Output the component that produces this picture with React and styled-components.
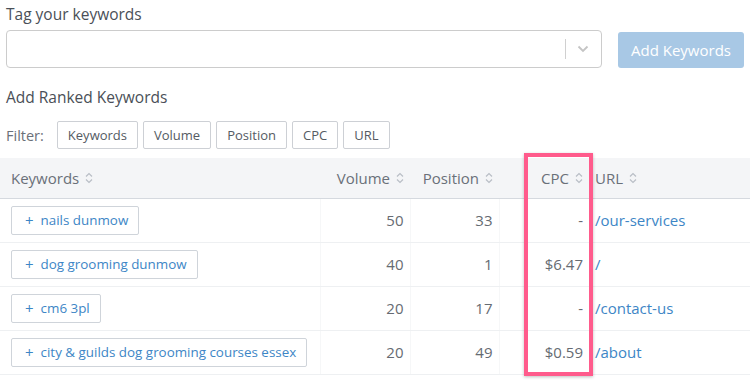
import React from 'react';
import styled, { createGlobalStyle } from 'styled-components';

const GlobalStyle = createGlobalStyle`
  body {
    margin: 0;
    background: #fff;
    font-family: 'Open Sans', 'Liberation Sans', sans-serif;
    color: #555;
  }
`;

const rows = [
  { keyword: 'nails dunmow', volume: 50, position: 33, cpc: '-', url: '/our-services' },
  { keyword: 'dog grooming dunmow', volume: 40, position: 1, cpc: '$6.47', url: '/' },
  { keyword: 'cm6 3pl', volume: 20, position: 17, cpc: '-', url: '/contact-us' },
  { keyword: 'city & guilds dog grooming courses essex', volume: 20, position: 49, cpc: '$0.59', url: '/about' },
];

const filters = ['Keywords', 'Volume', 'Position', 'CPC', 'URL'];

const SortIcon = () => (
  <svg width="8" height="12" viewBox="0 0 8 12" fill="none" stroke="#b9bec6" strokeWidth="1.2">
    <path d="M1 4.5 L4 1.5 L7 4.5" />
    <path d="M1 7.5 L4 10.5 L7 7.5" />
  </svg>
);

export default function App() {
  return (
    <Page>
      <GlobalStyle />
      <Section>
        <Label>Tag your keywords</Label>
        <TagRow>
          <Select>
            <Divider />
            <svg width="12" height="8" viewBox="0 0 12 8" fill="none" stroke="#c4c4c4" strokeWidth="1.8">
              <path d="M1.5 1.5 L6 6 L10.5 1.5" />
            </svg>
          </Select>
          <PrimaryButton>Add Keywords</PrimaryButton>
        </TagRow>
        <Label $top={19}>Add Ranked Keywords</Label>
        <FilterRow>
          <FilterLabel>Filter:</FilterLabel>
          {filters.map((f) => (
            <FilterButton key={f}>{f}</FilterButton>
          ))}
        </FilterRow>
      </Section>

      <TableWrap>
        <Table>
          <colgroup>
            <col style={{ width: 320 }} />
            <col style={{ width: 90 }} />
            <col style={{ width: 89 }} />
            <col style={{ width: 90 }} />
            <col />
          </colgroup>
          <thead>
            <tr>
              <Th>
                <HeadInner>Keywords <SortIcon /></HeadInner>
              </Th>
              <Th $right>
                <HeadInner $right>Volume <SortIcon /></HeadInner>
              </Th>
              <Th $right>
                <HeadInner $right>Position <SortIcon /></HeadInner>
              </Th>
              <Th $right>
                <HeadInner $right>CPC <SortIcon /></HeadInner>
              </Th>
              <Th $url>
                <HeadInner>URL <SortIcon /></HeadInner>
              </Th>
            </tr>
          </thead>
          <tbody>
            {rows.map((r) => (
              <tr key={r.keyword}>
                <Td>
                  <KeywordButton>
                    <span>+</span>
                    {r.keyword}
                  </KeywordButton>
                </Td>
                <Td $right>{r.volume}</Td>
                <Td $right>{r.position}</Td>
                <Td $right $plain>{r.cpc}</Td>
                <Td $url>
                  <Link>{r.url}</Link>
                </Td>
              </tr>
            ))}
          </tbody>
        </Table>
        <Highlight />
      </TableWrap>
    </Page>
  );
}

const Page = styled.div`
  width: 750px;
  height: 386px;
  overflow: hidden;
`;

const Section = styled.div`
  padding: 0 6px;
`;

const Label = styled.div`
  font-size: 15.5px;
  line-height: 20px;
  padding-top: ${(p) => p.$top ?? 4}px;
  color: #4a4f57;
`;

const TagRow = styled.div`
  display: flex;
  align-items: flex-end;
  gap: 16px;
  margin-top: 6px;
`;

const Select = styled.div`
  flex: 1;
  height: 38px;
  box-sizing: border-box;
  border: 1px solid #ccc;
  border-radius: 4px;
  display: flex;
  align-items: center;
  justify-content: flex-end;
  padding-right: 12px;
  gap: 11px;
`;

const Divider = styled.div`
  width: 1px;
  height: 20px;
  background: #d0d0d0;
`;

const PrimaryButton = styled.button`
  width: 126px;
  height: 36px;
  border: none;
  border-radius: 3px;
  background: #a8c8e5;
  color: #fff;
  font-family: inherit;
  font-size: 15px;
  padding: 0;
`;

const FilterRow = styled.div`
  display: flex;
  align-items: center;
  gap: 5px;
  margin-top: 14px;
`;

const FilterLabel = styled.span`
  font-size: 14.5px;
  color: #6a7079;
  margin-right: 8px;
`;

const FilterButton = styled.button`
  height: 28px;
  box-sizing: border-box;
  border: 1px solid #cdd0d5;
  border-radius: 2px;
  background: #fff;
  color: #555b63;
  font-family: inherit;
  font-size: 13px;
  padding: 0 10px;
`;

const TableWrap = styled.div`
  position: relative;
  margin-top: 9px;
`;

const Table = styled.table`
  width: 100%;
  border-collapse: collapse;
  table-layout: fixed;
`;

const Th = styled.th`
  height: 40px;
  box-sizing: border-box;
  background: #f4f5f7;
  border-bottom: 1px solid #d5d9df;
  font-weight: 400;
  font-size: 15px;
  color: #6a7079;
  padding: 1px ${(p) => (p.$right ? '6px' : '0')} 0 ${(p) => (p.$url ? '6px' : p.$right ? '0' : '11px')};
  text-align: ${(p) => (p.$right ? 'right' : 'left')};
`;

const HeadInner = styled.span`
  display: inline-flex;
  align-items: center;
  gap: 6px;
  justify-content: ${(p) => (p.$right ? 'flex-end' : 'flex-start')};
`;

const Td = styled.td`
  height: 44px;
  box-sizing: border-box;
  border-bottom: 1px solid #eef0f2;
  border-right: ${(p) => (p.$plain || p.$url ? 'none' : '1px solid #f6f7f8')};
  font-size: 15px;
  color: #666b72;
  padding: 0 ${(p) => (p.$right ? '6px' : '0')} 0 ${(p) => (p.$url ? '6px' : p.$right ? '0' : '11px')};
  text-align: ${(p) => (p.$right ? 'right' : 'left')};
`;

const KeywordButton = styled.button`
  display: inline-flex;
  align-items: center;
  gap: 7px;
  height: 29px;
  box-sizing: border-box;
  border: 1px solid #cfd4da;
  border-radius: 2px;
  background: #fff;
  color: #3d86c6;
  font-family: inherit;
  font-size: 13.4px;
  padding: 0 10px 0 13px;
  span {
    font-size: 15px;
  }
`;

const Link = styled.span`
  color: #3d86c6;
`;

const Highlight = styled.div`
  position: absolute;
  left: 524px;
  top: -5px;
  width: 69px;
  height: 223px;
  box-sizing: border-box;
  border: 4px solid #ff5b8c;
  box-shadow: 0 1px 3px rgba(0, 0, 0, 0.25);
  pointer-events: none;
`;
